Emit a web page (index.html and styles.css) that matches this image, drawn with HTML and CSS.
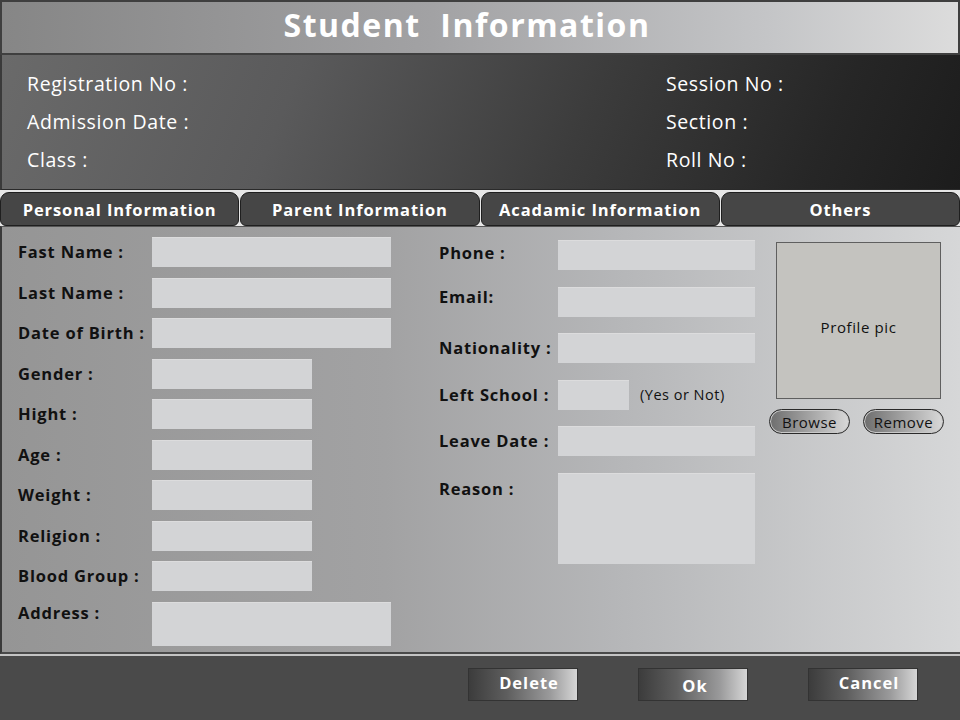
FILE: index.html
```html
<!DOCTYPE html>
<html lang="en">
<head>
<meta charset="utf-8">
<title>Student Information</title>
<link rel="stylesheet" href="styles.css">
</head>
<body>
<div class="app">
  <header class="titlebar"><h1>Student&nbsp; Information</h1></header>

  <section class="summary">
    <div class="sum-col">
      <div class="sum-item">Registration No :</div>
      <div class="sum-item">Admission Date :</div>
      <div class="sum-item">Class :</div>
    </div>
    <div class="sum-col">
      <div class="sum-item">Session No :</div>
      <div class="sum-item">Section :</div>
      <div class="sum-item">Roll No :</div>
    </div>
  </section>

  <nav class="tabs">
    <div class="tab">Personal Information</div>
    <div class="tab">Parent Information</div>
    <div class="tab">Acadamic Information</div>
    <div class="tab">Others</div>
  </nav>

  <main class="form">
    <div class="col col-left">
      <div class="row"><span class="label">Fast Name :</span><span class="field wide"></span></div>
      <div class="row"><span class="label">Last Name :</span><span class="field wide"></span></div>
      <div class="row"><span class="label">Date of Birth :</span><span class="field wide"></span></div>
      <div class="row"><span class="label">Gender :</span><span class="field narrow"></span></div>
      <div class="row"><span class="label">Hight :</span><span class="field narrow"></span></div>
      <div class="row"><span class="label">Age :</span><span class="field narrow"></span></div>
      <div class="row"><span class="label">Weight :</span><span class="field narrow"></span></div>
      <div class="row"><span class="label">Religion :</span><span class="field narrow"></span></div>
      <div class="row"><span class="label">Blood Group :</span><span class="field narrow"></span></div>
      <div class="row row-top"><span class="label">Address :</span><span class="field wide tall"></span></div>
    </div>

    <div class="col col-mid">
      <div class="row"><span class="label up2">Phone :</span><span class="field mid"></span></div>
      <div class="row"><span class="label up">Email:</span><span class="field mid"></span></div>
      <div class="row"><span class="label">Nationality :</span><span class="field mid"></span></div>
      <div class="row"><span class="label">Left School :</span><span class="field small"></span><span class="hint">(Yes or Not)</span></div>
      <div class="row"><span class="label">Leave Date :</span><span class="field mid"></span></div>
      <div class="row row-top"><span class="label reason-label">Reason :</span><span class="field mid reason"></span></div>
    </div>

    <div class="col col-right">
      <div class="photo">Profile pic</div>
      <div class="photo-actions">
        <button class="pill">Browse</button>
        <button class="pill">Remove</button>
      </div>
    </div>
  </main>

  <footer class="actions">
    <button class="btn">Delete</button>
    <button class="btn btn-ok">Ok</button>
    <button class="btn">Cancel</button>
  </footer>
</div>
</body>
</html>
```

FILE: styles.css
```css
* { box-sizing: border-box; }
html, body { margin: 0; padding: 0; }
body {
  width: 960px;
  height: 720px;
  background: #e6e6e6;
  font-family: "Open Sans", "Noto Sans", sans-serif;
  overflow: hidden;
}
.app {
  width: 960px;
  height: 720px;
  display: flex;
  flex-direction: column;
}

/* Title bar */
.titlebar {
  height: 55px;
  border: 2px solid #3f3f3f;
  background: linear-gradient(to right, #868686 0%, #a2a2a4 45%, #c4c5c7 80%, #dcdcdc 100%);
  display: flex;
  align-items: center;
  justify-content: center;
  padding-bottom: 5px;
}
.titlebar h1 {
  margin: 0 0 0 -26px;
  color: #fff;
  font-size: 32px;
  font-weight: 700;
  letter-spacing: 1.5px;
  line-height: 1;
}

/* Summary */
.summary {
  height: 135px;
  border-left: 2px solid #3a3a3a;
  border-bottom: 1px solid #2a2a2a;
  background: linear-gradient(112deg, #6a6a6a 0%, #5a5a5b 30%, #3c3c3c 60%, #262626 85%, #1c1c1c 100%);
  display: grid;
  grid-template-columns: 639px 1fr;
  padding: 16px 0 0 25px;
  color: #fff;
}
.sum-col {
  display: flex;
  flex-direction: column;
  gap: 12px;
}
.sum-item {
  font-size: 19.5px;
  line-height: 26px;
  letter-spacing: 0.6px;
}

/* Tabs */
.tabs {
  margin-top: 2px;
  height: 34px;
  display: grid;
  grid-template-columns: repeat(4, 1fr);
  gap: 1px;
  background: #e6e6e6;
}
.tab {
  background: #464646;
  border: 1px solid #1f1f1f;
  border-radius: 9px 9px 6px 6px;
  color: #fff;
  font-weight: 700;
  font-size: 16.5px;
  letter-spacing: 0.9px;
  display: flex;
  align-items: center;
  justify-content: center;
  padding-top: 1px;
}

/* Form */
.form {
  height: 428px;
  border-left: 2px solid #3a3a3a;
  border-top: 1px solid #555;
  border-bottom: 2px solid #4a4a4a;
  background: linear-gradient(to right, #959595 0%, #a2a2a3 40%, #b6b7b9 65%, #d6d7d8 100%);
  display: grid;
  grid-template-columns: 421px 337px 165px;
  padding-left: 16px;
  align-items: start;
}
.col { display: flex; flex-direction: column; }
.col-left { padding-top: 10px; gap: 10.5px; }
.col-mid { padding-top: 13px; gap: 16.5px; }
.col-right { padding-top: 15px; }

.row {
  display: flex;
  align-items: center;
}
.row-top { align-items: flex-start; }
.row-top .label { margin-top: 1px; }
.label {
  color: #111;
  font-weight: 700;
  font-size: 16.5px;
  letter-spacing: 0.8px;
  line-height: 20px;
  white-space: nowrap;
}
.col-left .label { width: 134px; }
.col-mid .label { width: 119px; }
.label.up { margin-top: -10px; }
.label.up2 { margin-top: -4px; }
.row-top .label.reason-label { margin-top: 6px; }
.field {
  display: block;
  height: 30px;
  background: #d3d4d6;
  border-top: 1px solid #dcdcdd;
}
.wide { width: 239px; }
.narrow { width: 160px; }
.tall { height: 44px; }
.mid { width: 197px; }
.small { width: 71px; }
.reason { height: 91px; }
.hint {
  margin-left: 11px;
  font-size: 14.5px;
  letter-spacing: 0.5px;
  color: #111;
}

/* Profile pic */
.photo {
  width: 165px;
  height: 157px;
  background: #c4c3bf;
  border: 1px solid #5f5f5f;
  display: flex;
  align-items: center;
  justify-content: center;
  padding-top: 12px;
  font-size: 15px;
  letter-spacing: 0.6px;
  color: #111;
}
.photo-actions {
  margin: 10px -3px 0 -7px;
  display: flex;
  justify-content: space-between;
}
.pill {
  width: 81px;
  height: 25px;
  border: 1px solid #2a2a2a;
  border-radius: 13px;
  background: linear-gradient(to right, #6e6e6e 0%, #9e9e9e 45%, #d9d9d9 100%);
  box-shadow: inset 0 0 0 1px #c9c9c9;
  font-family: "Open Sans", "Noto Sans", sans-serif;
  font-size: 15px;
  letter-spacing: 0.5px;
  color: #111;
  padding: 0;
}

/* Footer */
.actions {
  flex: 1;
  border-top: 2px solid #c4c4c4;
  background: #4a4a4a;
  display: flex;
  justify-content: flex-end;
  align-items: flex-start;
  padding: 12px 42px 0 0;
  gap: 60px;
}
.btn {
  width: 110px;
  height: 33px;
  border: 1px solid #333;
  background: linear-gradient(to right, #3c3c3c 0%, #5e5e5e 35%, #9a9a9b 75%, #d6d6d6 100%);
  color: #fff;
  font-family: "Open Sans", "Noto Sans", sans-serif;
  font-weight: 700;
  font-size: 16.5px;
  letter-spacing: 1px;
  padding: 0 0 3px 12px;
  line-height: 1;
}
.btn-ok { padding: 3px 0 0 4px; }
```
